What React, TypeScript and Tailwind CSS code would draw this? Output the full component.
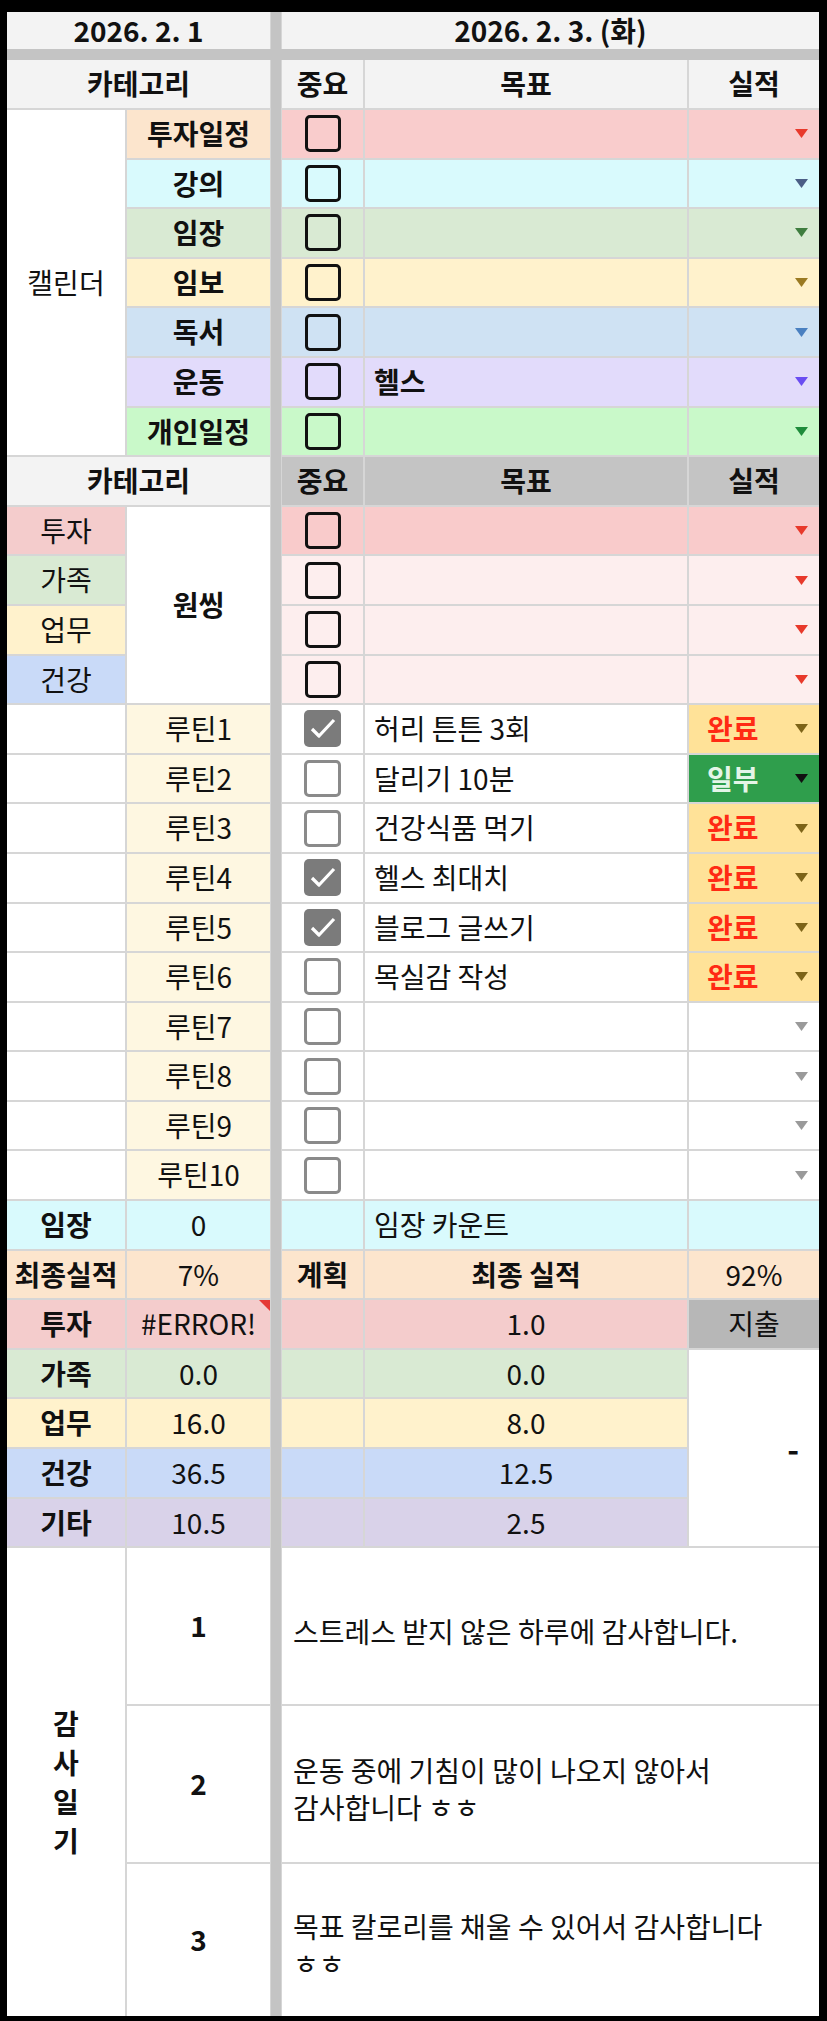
import type { ReactNode } from "react";

type CalendarRow = {
  label: string;
  labelBg: string;
  rowBg: string;
  arrow: string;
  goal?: string;
};

const calendarRows: CalendarRow[] = [
  { label: "투자일정", labelBg: "bg-[#fce5cd]", rowBg: "bg-[#f9cccc]", arrow: "#e8392b" },
  { label: "강의", labelBg: "bg-[#d9fafd]", rowBg: "bg-[#d9fafd]", arrow: "#4b5e86" },
  { label: "임장", labelBg: "bg-[#d9ead3]", rowBg: "bg-[#d9ead3]", arrow: "#3f7d3f" },
  { label: "임보", labelBg: "bg-[#fff2cc]", rowBg: "bg-[#fff2cc]", arrow: "#9a7a22" },
  { label: "독서", labelBg: "bg-[#cfe2f3]", rowBg: "bg-[#cfe2f3]", arrow: "#4a80c0" },
  { label: "운동", labelBg: "bg-[#e2dbfb]", rowBg: "bg-[#e2dbfb]", arrow: "#6a4df2", goal: "헬스" },
  { label: "개인일정", labelBg: "bg-[#c9f9c9]", rowBg: "bg-[#c9f9c9]", arrow: "#1f8c3b" }
];

const wishRows = [
  { label: "투자", labelBg: "bg-[#f4cccc]", rowBg: "bg-[#f9cbcb]" },
  { label: "가족", labelBg: "bg-[#d9ead3]", rowBg: "bg-[#fdeeee]" },
  { label: "업무", labelBg: "bg-[#fff2cc]", rowBg: "bg-[#fdeeee]" },
  { label: "건강", labelBg: "bg-[#c9daf8]", rowBg: "bg-[#fdeeee]" }
];

type Result = "done" | "partial" | null;

const routines: Array<{ name: string; checked: boolean; goal: string; result: Result }> = [
  { name: "루틴1", checked: true, goal: "허리 튼튼 3회", result: "done" },
  { name: "루틴2", checked: false, goal: "달리기 10분", result: "partial" },
  { name: "루틴3", checked: false, goal: "건강식품 먹기", result: "done" },
  { name: "루틴4", checked: true, goal: "헬스 최대치", result: "done" },
  { name: "루틴5", checked: true, goal: "블로그 글쓰기", result: "done" },
  { name: "루틴6", checked: false, goal: "목실감 작성", result: "done" },
  { name: "루틴7", checked: false, goal: "", result: null },
  { name: "루틴8", checked: false, goal: "", result: null },
  { name: "루틴9", checked: false, goal: "", result: null },
  { name: "루틴10", checked: false, goal: "", result: null }
];

const summary = [
  { label: "가족", bg: "bg-[#d9ead3]", total: "0.0", actual: "0.0" },
  { label: "업무", bg: "bg-[#fff2cc]", total: "16.0", actual: "8.0" },
  { label: "건강", bg: "bg-[#c9daf8]", total: "36.5", actual: "12.5" },
  { label: "기타", bg: "bg-[#d9d2e9]", total: "10.5", actual: "2.5" }
];

const diary = [
  { no: "1", text: "스트레스 받지 않은 하루에 감사합니다." },
  { no: "2", text: "운동 중에 기침이 많이 나오지 않아서 감사합니다 ㅎㅎ" },
  { no: "3", text: "목표 칼로리를 채울 수 있어서 감사합니다 ㅎㅎ" }
];

function Cell({ className = "", children }: { className?: string; children?: ReactNode }) {
  return <div className={`flex items-center justify-center ${className}`}>{children}</div>;
}

function Arrow({ color }: { color: string }) {
  return (
    <svg width="13" height="9" viewBox="0 0 13 9" className="shrink-0">
      <path d="M0 0h13L6.5 9z" fill={color} />
    </svg>
  );
}

function Checkbox({ variant }: { variant: "black" | "gray" | "checked" }) {
  if (variant === "checked") {
    return (
      <div className="flex h-[37px] w-[37px] items-center justify-center rounded-[5px] bg-[#7b7b7b]">
        <svg width="37" height="37" viewBox="0 0 37 37">
          <polyline points="8,19 15,26 30,10" fill="none" stroke="#fff" strokeWidth="3.2" strokeLinejoin="round" />
        </svg>
      </div>
    );
  }
  if (variant === "gray") {
    return <div className="h-[37px] w-[37px] rounded-[5px] border-[3px] border-[#8a8a8a] bg-white" />;
  }
  return <div className="h-[37px] w-[36px] rounded-[5px] border-[3.5px] border-[#111]" />;
}

export default function App() {
  return (
    <div className="min-h-[2021px] bg-black pl-[7px] pt-[12px] font-['Noto_Sans_CJK_KR','Noto_Sans',sans-serif] text-[28px] leading-[1.2] text-[#111]">
      <div className="grid w-[812px] grid-cols-[118px_143px_8px_81px_322px_130px] grid-rows-[37px_7px_48px_repeat(29,47.6px)_156px_156px_152px] gap-[2px] bg-[#d6d6d6]">
        {/* split bars */}
        <div className="col-start-3 row-span-full -mx-[1px] bg-[#c4c4c4]" />
        <div className="col-span-full row-start-2 -my-[2px] bg-[#c4c4c4]" />

        {/* dates */}
        <Cell className="col-span-2 bg-[#f3f3f3] font-bold">2026. 2. 1</Cell>
        <Cell className="col-span-3 bg-[#f3f3f3] font-bold">2026. 2. 3. (화)</Cell>

        {/* calendar header */}
        <Cell className="col-span-2 bg-[#f3f3f3] font-bold">카테고리</Cell>
        <Cell className="bg-[#f3f3f3] font-bold">중요</Cell>
        <Cell className="bg-[#f3f3f3] font-bold">목표</Cell>
        <Cell className="bg-[#f3f3f3] font-bold">실적</Cell>

        {calendarRows.map((row, i) => (
          <div key={row.label} className="contents">
            {i === 0 ? <Cell className="row-span-7 bg-white">캘린더</Cell> : null}
            <Cell className={`${row.labelBg} font-bold`}>{row.label}</Cell>
            <Cell className={row.rowBg}>
              <Checkbox variant="black" />
            </Cell>
            <Cell className={`${row.rowBg} justify-start! pl-[9px] font-bold`}>{row.goal}</Cell>
            <Cell className={`${row.rowBg} justify-end! pr-[11px]`}>
              <Arrow color={row.arrow} />
            </Cell>
          </div>
        ))}

        {/* one thing header */}
        <Cell className="col-span-2 bg-[#f3f3f3] font-bold">카테고리</Cell>
        <Cell className="bg-[#c4c4c4] font-bold">중요</Cell>
        <Cell className="bg-[#c4c4c4] font-bold">목표</Cell>
        <Cell className="bg-[#c4c4c4] font-bold">실적</Cell>

        {wishRows.map((row, i) => (
          <div key={row.label} className="contents">
            <Cell className={row.labelBg}>{row.label}</Cell>
            {i === 0 ? <Cell className="row-span-4 bg-white font-bold">원씽</Cell> : null}
            <Cell className={row.rowBg}>
              <Checkbox variant="black" />
            </Cell>
            <div className={row.rowBg} />
            <Cell className={`${row.rowBg} justify-end! pr-[11px]`}>
              <Arrow color="#e8392b" />
            </Cell>
          </div>
        ))}

        {routines.map((r) => (
          <div key={r.name} className="contents">
            <div className="bg-white" />
            <Cell className="bg-[#fef7e1]">{r.name}</Cell>
            <Cell className="bg-white">
              <Checkbox variant={r.checked ? "checked" : "gray"} />
            </Cell>
            <Cell className="justify-start! bg-white pl-[9px]">{r.goal}</Cell>
            {r.result === "done" ? (
              <Cell className="justify-between! bg-[#ffe298] pl-[18px] pr-[11px] font-bold text-[#ff2a14]">
                완료
                <Arrow color="#7d6418" />
              </Cell>
            ) : r.result === "partial" ? (
              <Cell className="justify-between! bg-[#2f9e4c] pl-[18px] pr-[11px] font-bold text-[#e4f5e8]">
                일부
                <Arrow color="#111" />
              </Cell>
            ) : (
              <Cell className="justify-end! bg-white pr-[11px]">
                <Arrow color="#9a9a9a" />
              </Cell>
            )}
          </div>
        ))}

        {/* site visit count */}
        <Cell className="bg-[#d9fafd] font-bold">임장</Cell>
        <Cell className="bg-[#d9fafd]">0</Cell>
        <div className="bg-[#d9fafd]" />
        <Cell className="justify-start! bg-[#d9fafd] pl-[9px]">임장 카운트</Cell>
        <div className="bg-[#d9fafd]" />

        {/* totals */}
        <Cell className="bg-[#fce5cd] font-bold">최종실적</Cell>
        <Cell className="bg-[#fce5cd]">7%</Cell>
        <Cell className="bg-[#fce5cd] font-bold">계획</Cell>
        <Cell className="bg-[#fce5cd] font-bold">최종 실적</Cell>
        <Cell className="bg-[#fce5cd]">92%</Cell>

        <Cell className="bg-[#f4cccc] font-bold">투자</Cell>
        <Cell className="relative bg-[#f4cccc]">
          #ERROR!
          <span className="absolute right-0 top-0 h-0 w-0 border-l-[11px] border-t-[11px] border-l-transparent border-t-[#e53935]" />
        </Cell>
        <div className="bg-[#f4cccc]" />
        <Cell className="bg-[#f4cccc]">1.0</Cell>
        <Cell className="bg-[#b7b7b7]">지출</Cell>

        {summary.map((row, i) => (
          <div key={row.label} className="contents">
            <Cell className={`${row.bg} font-bold`}>{row.label}</Cell>
            <Cell className={row.bg}>{row.total}</Cell>
            <div className={row.bg} />
            <Cell className={row.bg}>{row.actual}</Cell>
            {i === 0 ? <Cell className="row-span-4 justify-end! bg-white pr-[20px] text-[32px] font-bold">-</Cell> : null}
          </div>
        ))}

        {/* gratitude journal */}
        {diary.map((d, i) => (
          <div key={d.no} className="contents">
            {i === 0 ? (
              <Cell className="row-span-3 flex-col bg-white font-bold leading-[39px]">
                <span>감</span>
                <span>사</span>
                <span>일</span>
                <span>기</span>
              </Cell>
            ) : null}
            <Cell className="bg-white font-bold">{d.no}</Cell>
            <Cell className="col-span-3 justify-start! bg-white pl-[11px] pr-[10px] pt-[10px] leading-[37px]">
              <p className="break-keep">{d.text}</p>
            </Cell>
          </div>
        ))}
      </div>
    </div>
  );
}
